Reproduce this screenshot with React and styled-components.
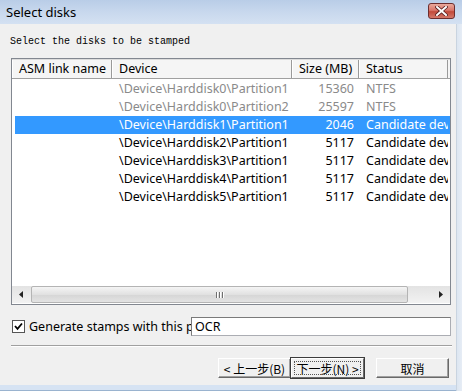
import React from 'react'
import styled, { createGlobalStyle } from 'styled-components'

const GlobalStyle = createGlobalStyle`
  html, body {
    margin: 0;
    padding: 0;
    background: #f0f0f0;
  }
  body {
    font-family: "Noto Sans", "Noto Sans CJK SC", sans-serif;
    font-size: 12.5px;
    color: #000;
  }
`

const Window = styled.div`
  width: 462px;
  height: 391px;
  display: flex;
  flex-direction: column;
  box-sizing: border-box;
  background: #f0f0f0;
  overflow: hidden;
`

const TitleBar = styled.div`
  height: 24px;
  flex: none;
  display: flex;
  align-items: center;
  justify-content: space-between;
  padding: 0 7px 0 6px;
  background: linear-gradient(to bottom, #b9cde7 0%, #c8d8ed 50%, #d4e1f2 100%);
`

const Title = styled.div`
  font-family: "Noto Sans", sans-serif;
  font-size: 13px;
  color: #000;
  padding-bottom: 1px;
`

const CloseButton = styled.div`
  width: 27px;
  height: 16px;
  margin-top: -2px;
  box-sizing: border-box;
  border: 1px solid #6d2e2e;
  border-radius: 3px;
  background: linear-gradient(to bottom, #e9a99c 0%, #d9766a 45%, #c24a3a 55%, #d4786a 100%);
  display: flex;
  align-items: center;
  justify-content: center;
`

const Frame = styled.div`
  flex: 1;
  display: flex;
  min-height: 0;
`

const Body = styled.div`
  flex: 1;
  display: flex;
  flex-direction: column;
  padding: 11px 4px 0 11px;
  background: #f0f0f0;
  border-bottom: 1px solid #9ab3cf;
  box-shadow: inset 0 -5px 0 #d6e3f3;
`

const RightEdge = styled.div`
  width: 7px;
  flex: none;
  background: linear-gradient(to right, #dde6f1, #e8eef6);
  border-left: 1px solid #c9d4e0;
  box-sizing: border-box;
`

const Caption = styled.div`
  font-family: "Liberation Mono", monospace;
  font-size: 10px;
  height: 14px;
  line-height: 14px;
  margin-left: -1px;
  margin-bottom: 9px;
`

const ListView = styled.div`
  width: 440px;
  height: 247px;
  box-sizing: border-box;
  border: 1px solid #828790;
  background: #fff;
  display: flex;
  flex-direction: column;
  overflow: hidden;
`

const Columns = styled.div`
  display: grid;
  grid-template-columns: 100px 180px 67px 89px;
`

const HeaderRow = styled(Columns)`
  height: 20px;
  box-sizing: border-box;
  background: #f5f5f5;
  border-bottom: 1px solid #a0a0a0;
  border-top: 1px solid #dcdcdc;
`

const HeaderCell = styled.div`
  padding-left: 7px;
  line-height: 18px;
  white-space: nowrap;
  overflow: hidden;
  border-right: 1px solid #9a9a9a;
  box-shadow: inset 1px 0 0 #ffffff;
`

const Rows = styled.div`
  flex: 1;
  padding-top: 1px;
`

const Row = styled(Columns)`
  height: 18px;
  line-height: 18px;
  color: ${(p) => (p.$selected ? '#ffffff' : p.$dim ? '#8a8a8a' : '#000000')};
  background: ${(p) => (p.$selected ? 'linear-gradient(to right, transparent 3px, #3399ff 3px)' : 'transparent')};
`

const Cell = styled.div`
  white-space: nowrap;
  overflow: hidden;
  padding: 0 ${(p) => (p.$right ? '5px' : '0')} 0 ${(p) => (p.$right ? '0' : '7px')};
  text-align: ${(p) => (p.$right ? 'right' : 'left')};
`

const HScroll = styled.div`
  height: 17px;
  flex: none;
  display: flex;
  background: linear-gradient(to bottom, #e3e3e3, #f2f2f2);
  margin-bottom: 1px;
`

const ArrowBtn = styled.div`
  width: 18px;
  flex: none;
  display: flex;
  align-items: center;
  justify-content: center;
`

const Thumb = styled.div`
  width: 377px;
  margin: 0 1px;
  box-sizing: border-box;
  border: 1px solid #b4b4b4;
  border-radius: 2px;
  background: linear-gradient(to bottom, #f4f4f4, #e1e1e1 50%, #d5d5d5 51%, #e3e3e3);
  display: flex;
  align-items: center;
  justify-content: center;
  gap: 2px;
`

const Grip = styled.div`
  width: 1px;
  height: 6px;
  background: #6f6f6f;
  box-shadow: 1px 0 0 #fff;
`

const Track = styled.div`
  flex: 1;
`

const OptionRow = styled.div`
  display: flex;
  align-items: center;
  height: 19px;
  margin-top: 12px;
`

const CheckBox = styled.div`
  width: 13px;
  height: 13px;
  flex: none;
  box-sizing: border-box;
  border: 1px solid #555;
  background: #fff;
  display: flex;
  align-items: center;
  justify-content: center;
  margin: 0 5px 0 1px;
`

const OptionLabel = styled.div`
  width: 162px;
  margin-left: -1px;
  white-space: nowrap;
  overflow: hidden;
`

const TextInput = styled.div`
  flex: none;
  width: 260px;
  height: 19px;
  box-sizing: border-box;
  border: 1px solid #abadb3;
  border-top-color: #7a7a7a;
  border-left-color: #7a7a7a;
  background: #fff;
  padding-left: 3px;
  line-height: 18px;
`

const Separator = styled.div`
  width: 441px;
  height: 0;
  margin-top: 9px;
  border-top: 1px solid #a0a0a0;
  border-bottom: 1px solid #ffffff;
`

const ButtonBar = styled.div`
  display: flex;
  justify-content: flex-end;
  margin-top: 11px;
  padding-right: 3px;
`

const Button = styled.div`
  width: ${(p) => (p.$w ? p.$w : 73)}px;
  height: 20px;
  box-sizing: border-box;
  margin-left: ${(p) => (p.$gap ? p.$gap : 0)}px;
  display: flex;
  align-items: center;
  justify-content: center;
  font-family: "Noto Sans CJK SC", sans-serif;
  font-size: 12px;
  background: #f0f0f0;
  border: 1px solid;
  border-color: #ffffff #696969 #696969 #ffffff;
  box-shadow: ${(p) => (p.$default ? '0 0 0 1px #3c3c3c' : 'inset -1px -1px 0 #a0a0a0')};
  outline: ${(p) => (p.$default ? '1px dotted #555' : 'none')};
  outline-offset: -4px;
  white-space: nowrap;
`

const devices = [
  { path: '\\Device\\Harddisk0\\Partition1', size: '15360', status: 'NTFS', dim: true },
  { path: '\\Device\\Harddisk0\\Partition2', size: '25597', status: 'NTFS', dim: true },
  { path: '\\Device\\Harddisk1\\Partition1', size: '2046', status: 'Candidate device', selected: true },
  { path: '\\Device\\Harddisk2\\Partition1', size: '5117', status: 'Candidate device' },
  { path: '\\Device\\Harddisk3\\Partition1', size: '5117', status: 'Candidate device' },
  { path: '\\Device\\Harddisk4\\Partition1', size: '5117', status: 'Candidate device' },
  { path: '\\Device\\Harddisk5\\Partition1', size: '5117', status: 'Candidate device' },
]

const CloseIcon = () => (
  <svg width="13" height="10" viewBox="0 0 13 10">
    <path d="M2 1 L11 9 M11 1 L2 9" stroke="#5a2020" strokeWidth="3.6" strokeLinecap="square" />
    <path d="M2 1 L11 9 M11 1 L2 9" stroke="#ffffff" strokeWidth="2" strokeLinecap="square" />
  </svg>
)

const Arrow = ({ dir }) => (
  <svg width="4" height="7" viewBox="0 0 4 7">
    {dir === 'left' ? <path d="M4 0 L0 3.5 L4 7 Z" fill="#222" /> : <path d="M0 0 L4 3.5 L0 7 Z" fill="#222" />}
  </svg>
)

const Check = () => (
  <svg width="9" height="9" viewBox="0 0 9 9">
    <path d="M1 4 L3.5 6.8 L8 1.5" fill="none" stroke="#000" strokeWidth="1.8" />
  </svg>
)

export default function App() {
  return (
    <Window>
      <GlobalStyle />
      <TitleBar>
        <Title>Select disks</Title>
        <CloseButton>
          <CloseIcon />
        </CloseButton>
      </TitleBar>
      <Frame>
        <Body>
          <Caption>Select the disks to be stamped</Caption>
          <ListView>
            <HeaderRow>
              <HeaderCell>ASM link name</HeaderCell>
              <HeaderCell>Device</HeaderCell>
              <HeaderCell>Size (MB)</HeaderCell>
              <HeaderCell>Status</HeaderCell>
            </HeaderRow>
            <Rows>
              {devices.map((d) => (
                <Row key={d.path + d.size} $selected={d.selected} $dim={d.dim}>
                  <Cell />
                  <Cell>{d.path}</Cell>
                  <Cell $right>{d.size}</Cell>
                  <Cell>{d.status}</Cell>
                </Row>
              ))}
            </Rows>
            <HScroll>
              <ArrowBtn>
                <Arrow dir="left" />
              </ArrowBtn>
              <Thumb>
                <Grip />
                <Grip />
                <Grip />
              </Thumb>
              <Track />
              <ArrowBtn>
                <Arrow dir="right" />
              </ArrowBtn>
            </HScroll>
          </ListView>
          <OptionRow>
            <CheckBox>
              <Check />
            </CheckBox>
            <OptionLabel>Generate stamps with this prefix</OptionLabel>
            <TextInput>OCR</TextInput>
          </OptionRow>
          <Separator />
          <ButtonBar>
            <Button>&lt; 上一步(B)</Button>
            <Button $default>下一步(N) &gt;</Button>
            <Button $gap={12}>取消</Button>
          </ButtonBar>
        </Body>
        <RightEdge />
      </Frame>
    </Window>
  )
}
